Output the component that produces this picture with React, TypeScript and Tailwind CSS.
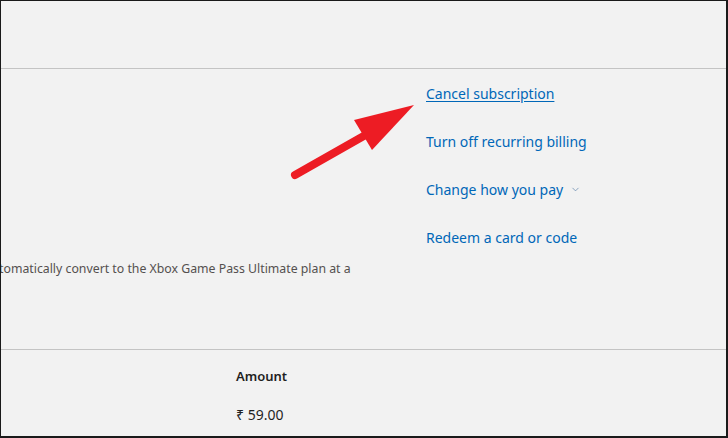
import { ChevronDown } from 'lucide-react'

const links = ['Cancel subscription', 'Turn off recurring billing', 'Change how you pay', 'Redeem a card or code']

function Arrow() {
  return (
    <svg className="absolute left-[280px] top-[90px]" width="140" height="100" viewBox="0 0 140 100">
      <line x1="14" y1="84" x2="88" y2="42" stroke="#ed1c24" strokeWidth="8" strokeLinecap="round" />
      <polygon points="133,14 73,29 91,59" fill="#ed1c24" />
    </svg>
  )
}

export default function App() {
  return (
    <div
      className="relative w-[728px] h-[438px] overflow-hidden bg-[#f2f2f2] border-l border-t border-r-2 border-b-2 border-[#1a1a1a]"
      style={{ fontFamily: '"Noto Sans", "Open Sans", sans-serif' }}
    >
      {/* top band */}
      <div className="h-[68px] border-b border-[#c4c4c4]" />

      {/* subscription details */}
      <div className="flex h-[281px] border-b border-[#c4c4c4]">
        <div className="w-[425px] flex flex-col justify-end pb-[71px]">
          <p className="-ml-[2px] text-[12.3px] text-[#54504f] whitespace-nowrap">
            tomatically convert to the Xbox Game Pass Ultimate plan at a
          </p>
        </div>
        <ul className="flex flex-col gap-[26px] pt-[13px] text-[14px] text-[#0067b8]">
          {links.map((l, i) => (
            <li key={l} className="flex items-center h-[22px] gap-[7px]">
              <span className={i === 0 ? 'underline underline-offset-2' : ''}>{l}</span>
              {i === 2 && <ChevronDown size={11} strokeWidth={1.5} className="text-[#5a7fa8]" />}
            </li>
          ))}
        </ul>
      </div>

      {/* billing table */}
      <div className="pl-[235px] pt-[17px] text-[#1f1f1f]">
        <div className="text-[13px] font-semibold h-[20px]">Amount</div>
        <div className="mt-[17px] text-[14px]">₹ 59.00</div>
      </div>

      <Arrow />
    </div>
  )
}
